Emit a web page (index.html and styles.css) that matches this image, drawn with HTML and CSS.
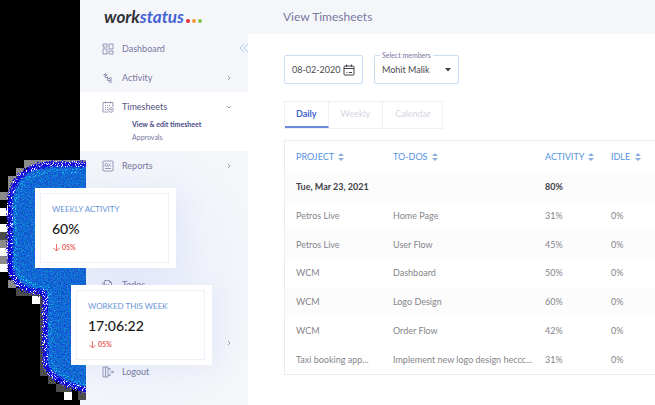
FILE: index.html
```html
<!DOCTYPE html>
<html lang="en">
<head>
<meta charset="utf-8">
<title>Workstatus – View Timesheets</title>
<link rel="stylesheet" href="styles.css">
</head>
<body>
<svg class="backdrop" width="86" height="405" viewBox="0 0 86 405" aria-hidden="true">
  <defs>
    <filter id="grain" x="0" y="0" width="100%" height="100%" color-interpolation-filters="sRGB">
      <feTurbulence type="fractalNoise" baseFrequency="0.7" numOctaves="3" seed="4"/>
      <feColorMatrix values="0.3 0 0 0 -0.08  0 0.6 0 0 0.11  0 0 0.4 0 0.63  0 0 0 0 1"/>
      <feComposite in2="SourceGraphic" operator="in"/>
    </filter>
    <filter id="rough" x="-10%" y="-10%" width="120%" height="120%" color-interpolation-filters="sRGB">
      <feTurbulence type="fractalNoise" baseFrequency="0.8" numOctaves="2" seed="9" result="n"/>
      <feDisplacementMap in="SourceGraphic" in2="n" scale="9" xChannelSelector="R" yChannelSelector="G"/>
    </filter>
    <filter id="speckle" x="-10%" y="-10%" width="120%" height="120%" color-interpolation-filters="sRGB">
      <feTurbulence type="fractalNoise" baseFrequency="0.9" numOctaves="2" seed="21"/>
      <feColorMatrix values="0 0 0 0 0  0 0 0 0 0  0 0 0 0 0  14 0 0 0 -8.2" result="m"/>
      <feComposite in="SourceGraphic" in2="m" operator="in"/>
    </filter>
    <path id="edge" d="M92 164H52Q14 166 10 200V266Q14 292 42 292Q46 296 45 304V362Q50 384 92 391"/>
  </defs>
  <g fill="#8a8a8a">
    <path d="M24 160h62v8H24zM16 168h8v8h-8zM8 176h8v16H8zM0 192h8v8H0zM0 240h8v8H0zM0 256h8v8H0zM8 280h8v8H8z"/>
  </g>
  <path fill="#4c4c4c" d="M16 176h8v8h-8zM16 288h24v8H16zM40 296h8v80h-8zM48 376h8v8h-8zM56 384h16v8H56zM0 232h8v8H0zM78 386h8v14h-8z"/>
  <path fill="#fff" d="M0 208h8v8H0zM0 224h8v8H0zM0 248h8v8H0zM0 264h8v8H0zM32 296h8v8h-8zM64 392h8v8h-8z"/>
  <path filter="url(#grain)" fill="#0d62dc" d="M86 164H52Q14 166 10 200V266Q14 292 42 292Q46 296 45 304V362Q50 384 86 391z"/>
  <g fill="none">
    <path stroke="#12c8ee" stroke-width="4" filter="url(#speckle)" d="M82 171H52Q20 173 15 204V264Q19 285 50 289V360Q56 378 86 384"/>
    <use href="#edge" stroke="#1004df" stroke-width="5" filter="url(#rough)"/>
    <use href="#edge" stroke="#fff" stroke-width="6" filter="url(#speckle)"/>
  </g>
</svg>

<div class="app">
  <aside class="sidebar">
    <div class="brand"><span class="brand-a">work</span><span class="brand-b">status</span><i class="dot red"></i><i class="dot orange"></i><i class="dot green"></i></div>
    <nav>
      <a class="item" href="#">
        <svg class="icon" viewBox="0 0 12 12"><path d="M1 1h4v3H1zM1 6h4v5H1zM7 1h4v5H7zM7 8h4v3H7z"/></svg>
        <span>Dashboard</span>
      </a>
      <a class="item" href="#">
        <svg class="icon" viewBox="0 0 12 12"><path d="M1.500 3.500L3 1.500l2 1.500M3 2v3.500h2.500M3 3.500h2M5.500 4.500v4H8M5.500 6.500H8"/><circle cx="8.500" cy="6.500" r="1"/><circle cx="8.500" cy="9.500" r="1.200"/></svg>
        <span>Activity</span>
        <svg class="chev" viewBox="0 0 6 6"><path d="M2 1l2 2-2 2"/></svg>
      </a>
      <div class="group">
        <a class="item active" href="#">
          <svg class="icon" viewBox="0 0 12 12"><path d="M6 11H1V1.500h10V6M3.500.5v2M8.500.5v2"/><path stroke-dasharray="1 1" d="M3 4.500h6M3 6.500h4M3 8.500h3"/><circle cx="9" cy="9" r="2.300"/><path d="M9 8v1h1"/></svg>
          <span>Timesheets</span>
          <svg class="chev" viewBox="0 0 6 6"><path d="M1 2l2 2 2-2"/></svg>
        </a>
        <a class="sub current" href="#">View &amp; edit timesheet</a>
        <a class="sub" href="#">Approvals</a>
      </div>
      <a class="item" href="#">
        <svg class="icon" viewBox="0 0 12 12"><rect x="1" y="1" width="10" height="10" rx="1"/><circle cx="4.500" cy="5" r="1.500"/><path d="M6.500 6.500l2-3M8 6h1M3 8.500h6"/></svg>
        <span>Reports</span>
        <svg class="chev" viewBox="0 0 6 6"><path d="M2 1l2 2-2 2"/></svg>
      </a>
      <a class="item todos" href="#">
        <svg class="icon" viewBox="0 0 12 12"><path d="M2.500 1.500h5l2 2V11h-7zM7.500 1.500v2h2M4.500 5v4M6.500 5v4M1 3v8"/></svg>
        <span>Todos</span>
      </a>
      <a class="item more" href="#" aria-label="More">
        <svg class="chev" viewBox="0 0 6 6"><path d="M2 1l2 2-2 2"/></svg>
      </a>
      <a class="item" href="#">
        <svg class="icon" viewBox="0 0 12 12"><path d="M6 1H1v10h5zM6 2.500h2V4M8 8v1.500H6M8 6h3.500M10 4.500L11.500 6 10 7.500M3.500 1v10"/></svg>
        <span>Logout</span>
      </a>
    </nav>
    <button class="collapse" type="button" aria-label="Collapse sidebar">
      <svg viewBox="0 0 9 10"><path d="M4.500 1l-3.500 4 3.500 4M8.500 1L5 5l3.500 4"/></svg>
    </button>
  </aside>

  <main>
    <header><h1>View Timesheets</h1></header>
    <div class="content">
      <form class="filters">
        <div class="field date">
          <input type="text" value="08-02-2020" aria-label="Date">
          <svg viewBox="0 0 12 12"><rect x="1" y="2" width="10" height="9" rx="1"/><path d="M1 4.500h10M3.500.5V3M8.500.5V3M3.500 8.500h1M6 8.500h3"/></svg>
        </div>
        <div class="field member">
          <label for="member">Select members</label>
          <select id="member"><option>Mohit Malik</option></select>
          <svg viewBox="0 0 6 4"><path d="M0 0h6L3 3.500z"/></svg>
        </div>
      </form>
      <div class="tabs" role="tablist">
        <button type="button" role="tab" aria-selected="true" class="tab selected">Daily</button>
        <button type="button" role="tab" aria-selected="false" class="tab">Weekly</button>
        <button type="button" role="tab" aria-selected="false" class="tab">Calendar</button>
      </div>
      <div class="sheet">
        <table>
          <colgroup><col class="c-project"><col class="c-todo"><col class="c-activity"><col></colgroup>
          <thead>
            <tr>
              <th>PROJECT <svg viewBox="0 0 6 8"><path d="M0 3h6L3 0zM0 5h6L3 8z"/></svg></th>
              <th>TO-DOS <svg viewBox="0 0 6 8"><path d="M0 3h6L3 0zM0 5h6L3 8z"/></svg></th>
              <th>ACTIVITY <svg viewBox="0 0 6 8"><path d="M0 3h6L3 0zM0 5h6L3 8z"/></svg></th>
              <th>IDLE <svg viewBox="0 0 6 8"><path d="M0 3h6L3 0zM0 5h6L3 8z"/></svg></th>
            </tr>
          </thead>
          <tbody>
            <tr class="day"><td>Tue, Mar 23, 2021</td><td></td><td>80%</td><td></td></tr>
            <tr><td>Petros Live</td><td>Home Page</td><td>31%</td><td>0%</td></tr>
            <tr><td>Petros Live</td><td>User Flow</td><td>45%</td><td>0%</td></tr>
            <tr><td>WCM</td><td>Dashboard</td><td>50%</td><td>0%</td></tr>
            <tr><td>WCM</td><td>Logo Design</td><td>60%</td><td>0%</td></tr>
            <tr><td>WCM</td><td>Order Flow</td><td>42%</td><td>0%</td></tr>
            <tr><td>Taxi booking app...</td><td>Implement new logo design heccc...</td><td>31%</td><td>0%</td></tr>
          </tbody>
        </table>
      </div>
    </div>
  </main>
</div>

<section class="card weekly">
  <div class="card-body">
    <h2>WEEKLY ACTIVITY</h2>
    <strong>60%</strong>
    <p><svg viewBox="0 0 7 8"><path d="M3.500 0v7M.5 4l3 3 3-3"/></svg>05%</p>
  </div>
</section>
<section class="card worked">
  <div class="card-body">
    <h2>WORKED THIS WEEK</h2>
    <strong>17:06:22</strong>
    <p><svg viewBox="0 0 7 8"><path d="M3.500 0v7M.5 4l3 3 3-3"/></svg>05%</p>
  </div>
</section>
</body>
</html>
```

FILE: styles.css
```css
* { box-sizing: border-box; }

body {
  margin: 0;
  background: #000;
  font-family: Lato, "Liberation Sans", sans-serif;
  font-size: 9px;
  line-height: 12px;
  overflow: hidden;
}

a { color: inherit; text-decoration: none; }
h1, h2, p { margin: 0; font-weight: 400; }
button, input, select { font: inherit; border: 0; padding: 0; background: none; }
svg { flex: none; }

.app {
  display: flex;
  min-height: 100vh;
  padding-left: 80px;
}

.backdrop {
  position: absolute;
  left: 0;
  top: 0;
  z-index: 1;
}

/* Sidebar */
.sidebar {
  position: relative;
  flex: none;
  width: 168px;
  background: radial-gradient(ellipse 130px 150px at 50px 280px, #e8edfb, #f5f6fa);
  color: #77779f;
}

.brand {
  display: flex;
  align-items: baseline;
  height: 34px;
  padding: 8px 0 0 24px;
  font-size: 17px;
  line-height: 18px;
  font-weight: 700;
  font-style: italic;
}
.brand-a { color: #303236; }
.brand-b { color: #4463d2; }
.dot { width: 4px; height: 4px; margin-left: 2px; border-radius: 50%; }
.red { background: #e22c38; }
.orange { background: #f29a3c; }
.green { background: #83c34c; }

.item {
  display: flex;
  align-items: center;
  height: 29px;
  padding: 0 16px 0 22px;
}
.icon {
  width: 12px;
  height: 12px;
  margin-right: 8px;
  fill: none;
  stroke: #8080a8;
  stroke-width: 0.8;
}
.chev {
  width: 6px;
  height: 6px;
  margin-left: auto;
  fill: none;
  stroke: #8888aa;
  stroke-width: 0.8;
}
.group {
  height: 59px;
  background: #fff;
  color: #50507e;
}
.sub {
  display: block;
  padding-left: 52px;
  font-size: 7px;
  line-height: 13px;
  color: #77779f;
}
.group .item { height: 30px; margin-bottom: -5px; }
.current { color: #474b86; font-weight: 700; line-height: 14px; }
.todos { margin-top: 90px; }
.more { margin-top: 29px; }

.collapse {
  position: absolute;
  top: 43px;
  right: 0;
  width: 9px;
  height: 10px;
}
.collapse svg {
  display: block;
  width: 9px;
  height: 10px;
  fill: none;
  stroke: #a8cdf5;
}

/* Main area */
main {
  flex: 1;
  min-width: 0;
  background: #fff;
}
header {
  height: 34px;
  padding: 9px 35px;
  background: #f5f6fa;
}
h1 { font-size: 12px; line-height: 16px; color: #77779f; }

.content { padding: 21px 0 0 36px; }
.filters { display: flex; gap: 11px; }
.field {
  position: relative;
  display: flex;
  align-items: center;
  height: 29px;
  padding: 0 7px;
  border: 1px solid #c9def6;
  border-radius: 2px;
  color: #4b4b50;
}
.date { width: 79px; }
.date input { flex: 1; min-width: 0; color: inherit; }
.date svg {
  width: 12px;
  height: 12px;
  fill: none;
  stroke: #414148;
}
.member { width: 85px; }
.member label {
  position: absolute;
  top: -7px;
  left: 5px;
  padding: 0 2px;
  background: #fff;
  font-size: 7px;
  color: #77779f;
  white-space: nowrap;
}
.member select { flex: 1; min-width: 0; appearance: none; color: inherit; }
.member svg { width: 6px; height: 4px; fill: #414148; }

.tabs {
  display: flex;
  width: max-content;
  height: 28px;
  margin-top: 17px;
  border: 1px solid #edf1f6;
}
.tab {
  padding: 0 12px;
  border-right: 1px solid #edf1f6;
  border-bottom: 2px solid transparent;
  color: #d5d7df;
}
.tab:first-child { padding: 0 11px; }
.tab:last-child { border-right: 0; }
.selected { color: #4463d2; border-bottom-color: #6c8bd9; font-weight: 700; }

/* Timesheet table */
.sheet {
  margin-top: 11px;
  border: 1px solid #e6eef3;
  border-right: 0;
}
table {
  width: 100%;
  height: 233px;
  table-layout: fixed;
  border-collapse: collapse;
  color: #85858a;
}
.c-project { width: 108px; }
.c-todo { width: 152px; }
.c-activity { width: 66px; }
th, td { padding: 0; text-align: left; white-space: nowrap; }
th:first-child, td:first-child { padding-left: 11px; }
th { height: 32px; font-weight: 400; color: #5593df; }
th svg {
  width: 6px;
  height: 8px;
  margin-left: 2px;
  vertical-align: -1px;
  fill: #8aaee0;
}
tbody tr:nth-child(odd) { background: #fcfcfd; }
tbody tr:last-child { background: none; }
.day { color: #414146; font-weight: 700; }

/* Floating cards */
.card {
  position: absolute;
  z-index: 2;
  width: 141px;
  height: 80px;
  padding: 5px;
  background: #fff;
  box-shadow: 8px 4px 24px rgba(120, 145, 225, 0.08);
}
.weekly { left: 35px; top: 188px; }
.worked { left: 71px; top: 285px; }
.card-body {
  height: 100%;
  margin-right: 2px;
  padding: 9px 11px;
  border: 1px solid #eff1fa;
}
.card h2 { font-size: 8px; line-height: 13px; color: #6694d8; white-space: nowrap; }
.card strong {
  display: block;
  margin: 4px 0 5px;
  font-size: 14px;
  line-height: 18px;
  font-weight: 500;
  color: #191919;
}
.card p {
  display: flex;
  align-items: center;
  gap: 2px;
  padding-left: 1px;
  font-size: 7px;
  line-height: 9px;
  font-weight: 700;
  color: #e95b5b;
}
.card svg { width: 7px; height: 8px; fill: none; stroke: #e95b5b; stroke-width: 0.9; }
```
